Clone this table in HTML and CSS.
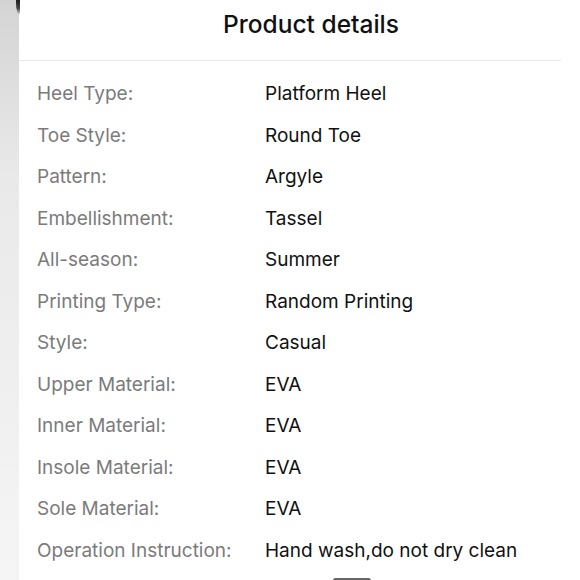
FILE: index.html
```html
<!DOCTYPE html>
<html>
<head>
<meta charset="utf-8">
<link rel="stylesheet" href="styles.css">
</head>
<body>
<div class="screen">
  <div class="backdrop"><div class="corner"></div></div>
  <div class="sheet">
    <h1 class="title">Product details</h1>
    <div class="divider"></div>
    <dl class="details">
      <div class="row"><dt>Heel Type:</dt><dd>Platform Heel</dd></div>
      <div class="row"><dt>Toe Style:</dt><dd>Round Toe</dd></div>
      <div class="row"><dt>Pattern:</dt><dd>Argyle</dd></div>
      <div class="row"><dt>Embellishment:</dt><dd>Tassel</dd></div>
      <div class="row"><dt>All-season:</dt><dd>Summer</dd></div>
      <div class="row"><dt>Printing Type:</dt><dd>Random Printing</dd></div>
      <div class="row"><dt>Style:</dt><dd>Casual</dd></div>
      <div class="row"><dt>Upper Material:</dt><dd>EVA</dd></div>
      <div class="row"><dt>Inner Material:</dt><dd>EVA</dd></div>
      <div class="row"><dt>Insole Material:</dt><dd>EVA</dd></div>
      <div class="row"><dt>Sole Material:</dt><dd>EVA</dd></div>
      <div class="row"><dt>Operation Instruction:</dt><dd>Hand wash,do not dry clean</dd></div>
    </dl>
  </div>
  <div class="home-indicator"></div>
</div>
</body>
</html>
```

FILE: styles.css
```css
html, body {
  margin: 0;
  padding: 0;
  background: #fff;
}
.screen {
  position: relative;
  display: flex;
  width: 580px;
  height: 580px;
  overflow: hidden;
  background: #fff;
  font-family: Inter, "Liberation Sans", sans-serif;
}
.backdrop {
  position: relative;
  flex: 0 0 19px;
  background: linear-gradient(to bottom, #d4d4d4 0%, #e9e9e9 30%, #f5f5f5 100%);
}
.corner {
  position: absolute;
  top: 0;
  right: -1px;
  width: 4px;
  height: 15px;
  background: linear-gradient(to bottom, #1e1e1e 0%, #444 55%, rgba(210,210,210,0) 100%);
  border-bottom-left-radius: 4px 12px;
}
.sheet {
  flex: 1 1 auto;
  min-width: 0;
  background: #fff;
}
.title {
  margin: 0;
  padding-left: 23px;
  height: 60px;
  line-height: 49px;
  text-align: center;
  font-size: 24.5px;
  font-weight: 500;
  color: #111;
}
.divider {
  height: 1px;
  background: #e8e8e8;
  margin-right: 19px;
}
.details {
  margin: 0;
  padding: 12px 0 0 18px;
}
.row {
  display: flex;
  height: 41.5px;
  line-height: 41.5px;
  font-size: 19px;
}
.row dt {
  flex: 0 0 228px;
  color: #7b7b7b;
}
.row dd {
  margin: 0;
  color: #111;
}
.home-indicator {
  position: absolute;
  left: 333px;
  bottom: -3px;
  width: 38px;
  height: 5px;
  border-radius: 3px;
  background: #666;
}
```
